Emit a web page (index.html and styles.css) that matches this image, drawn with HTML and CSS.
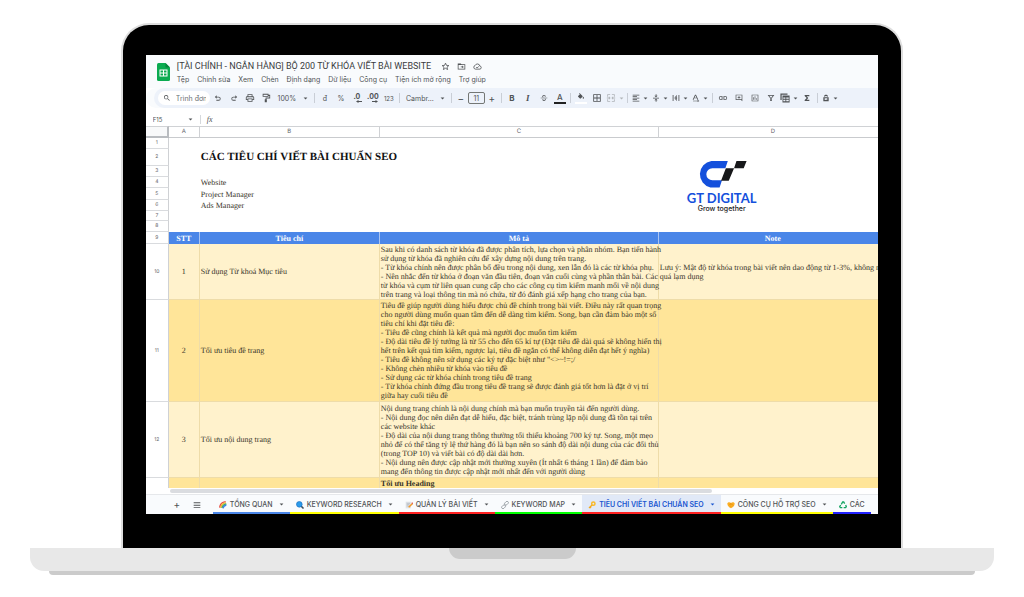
FILE: index.html
```html
<!DOCTYPE html>
<html lang="vi">
<head>
<meta charset="utf-8">
<meta name="viewport" content="width=device-width, initial-scale=1">
<title>BỘ 200 TỪ KHÓA VIẾT BÀI WEBSITE</title>
<link rel="stylesheet" href="styles.css">
</head>
<body>
<svg class="defs" aria-hidden="true">
  <symbol id="caret" viewBox="0 0 24 24"><path d="M3 7h18l-9 10z"/></symbol>
  <symbol id="search" viewBox="0 0 24 24"><path d="M15.500 14h-.8l-.3-.3A6.500 6.500 0 1 0 13.700 14.400l.3.300v.8l5 5 1.500-1.500zm-6 0a4.500 4.500 0 1 1 0-9 4.500 4.500 0 0 1 0 9z"/></symbol>
  <symbol id="undo" viewBox="0 0 24 24"><path d="M8 4v4h6a5.500 5.500 0 0 1 0 12H7v-2.500h7a3 3 0 0 0 0-7H8v4L2.500 9z"/></symbol>
  <symbol id="redo" viewBox="0 0 24 24"><path d="M16 4v4h-6a5.500 5.500 0 0 0 0 12h7v-2.500h-7a3 3 0 0 1 0-7h6v4L21.500 9z"/></symbol>
  <symbol id="print" viewBox="0 0 24 24"><path d="M19 8h-1V3H6v5H5a3 3 0 0 0-3 3v6h4v4h12v-4h4v-6a3 3 0 0 0-3-3zM8 5h8v3H8zm8 14H8v-4h8zm4-4h-2v-2H6v2H4v-4c0-.6.400-1 1-1h14c.6 0 1 .400 1 1z"/></symbol>
  <symbol id="paint" viewBox="0 0 24 24"><path d="M18 4V2H4v7h14V7h2v4h-9v4H9v7h5v-7h-1v-2h9V4zM6 4h10v3H6z"/></symbol>
  <symbol id="strike" viewBox="0 0 24 24"><path d="M2 11h20v2H2zM17 8h-2.500c0-2-1-2.500-2.500-2.500S9.300 6.300 9.300 8c0 .8.500 1.500 1.200 2H7.300C5.700 6 8 3 12 3s5 2.500 5 5zM7 16h2.500c0 1.500 1.200 2.500 2.700 2.500 2.300 0 3.300-2 2.100-4h2.700c1 3.500-1 6.500-5 6.500-3 0-5-2-5-5z"/></symbol>
  <symbol id="fill" viewBox="0 0 24 24"><path d="M16.600 8.900 7.600 0 6.200 1.400l2.400 2.400-5.200 5.100c-.5.600-.5 1.600 0 2.200l5.500 5.500c.6.500 1.600.5 2.200 0l5.500-5.500c.5-.6.500-1.600 0-2.200zM19 11.500s-2 2.200-2 3.500a2 2 0 0 0 4 0c0-1.300-2-3.500-2-3.500z"/></symbol>
  <symbol id="borders" viewBox="0 0 24 24"><path d="M3 3v18h18V3zm8 16H5v-6h6zm0-8H5V5h6zm8 8h-6v-6h6zm0-8h-6V5h6z"/></symbol>
  <symbol id="merge" viewBox="0 0 24 24"><path d="M3 3h7v2H5v4H3zm11 0h7v6h-2V5h-5zM3 15h2v4h5v2H3zm16 0h2v6h-7v-2h5zM2 11h5V8l4 4-4 4v-3H2zm20 0h-5V8l-4 4 4 4v-3h5z"/></symbol>
  <symbol id="align" viewBox="0 0 24 24"><path d="M2 2h20v2.500H2zm0 4.500h13v2.500H2zM2 11h20v2.500H2zm0 4.500h13V18H2zM2 20h20v2.500H2z"/></symbol>
  <symbol id="valign" viewBox="0 0 24 24"><path d="M3 11h18v2.500H3zM11 1h2.500v4H17l-5 5-5-5h4zm0 22h2.500v-4H17l-5-5-5 5h4z"/></symbol>
  <symbol id="wrap" viewBox="0 0 24 24"><path d="M2 3h2.500v18H2zm17.500 0H22v18h-2.500zM6 11h5L9 8.500 11 7l5 5-5 5-2-1.500 2-2.500H6zM12 4h2v16h-2z"/></symbol>
  <symbol id="rotate" viewBox="0 0 24 24"><path d="M2 17 9 2h3l7 15h-3l-1.500-4h-8L5 17zm5.500-6h6l-3-6.500zM3 20h14v-2.500l5 3.500-5 3v-2H3z"/></symbol>
  <symbol id="link" viewBox="0 0 24 24"><path d="M3.900 12A3.100 3.100 0 0 1 7 8.900h4V7H7a5 5 0 0 0 0 10h4v-1.900H7A3.100 3.100 0 0 1 3.900 12zM8 13h8v-2H8zm9-6h-4v1.900h4a3.100 3.100 0 0 1 0 6.200h-4V17h4a5 5 0 0 0 0-10z"/></symbol>
  <symbol id="comment" viewBox="0 0 24 24"><path d="M22 22V2H2v16h16zM4 4h16v12H4zm7 2h2v3h3v2h-3v3h-2v-3H8V9h3z"/></symbol>
  <symbol id="chart" viewBox="0 0 24 24"><path d="M2 2v20h20V2zm2 2h16v16H4zm3 6h2v7H7zm4-3h2v10h-2zm4 6h2v4h-2z"/></symbol>
  <symbol id="filter" viewBox="0 0 24 24"><path d="M2 3h20l-7.500 9.500V21h-5v-8.500zm4.500 2.200 5 6.300v7h1v-7l5-6.300z"/></symbol>
  <symbol id="views" viewBox="0 0 24 24"><path d="M1 1h17v3H4v13H1zm5 5h17v17H6zm2 5v3h5v-3zm7 0v3h6v-3zm-7 5v4h5v-4zm7 0v4h6v-4z"/></symbol>
  <symbol id="sigma" viewBox="0 0 24 24"><path d="M5 3h14v4H11l5 5-5 5h8v4H5v-3l6-6-6-6z"/></symbol>
  <symbol id="ext" viewBox="0 0 24 24"><path d="M6 7c1-6 11-6 12 0l-2 1c-1-3-7-3-8 0zM4 10h16v12H4z"/><path fill="#edf2fa" d="M8 13h8v2h-5v1h5v2H8z"/></symbol>
</svg>

<main class="laptop">
  <div class="lid">
    <div class="screen">
      <header class="top">
        <svg class="app-icon" viewBox="0 0 26 36" aria-hidden="true"><path fill="#0bab51" d="M3 0h14l9 9v24a3 3 0 0 1-3 3H3a3 3 0 0 1-3-3V3a3 3 0 0 1 3-3z"/><path fill="#06843d" d="M17 0l9 9h-9z"/><path fill="#fff" d="M5 13h16v14H5zm2 2v4h5v-4zm7 0v4h5v-4zm-7 6v4h5v-4zm7 0v4h5v-4z"/></svg>
        <div class="top-text">
          <div class="title-row">
            <h1 class="doc-title">[TÀI CHÍNH - NGÂN HÀNG] BỘ 200 TỪ KHÓA VIẾT BÀI WEBSITE</h1>
            <button class="mini" aria-label="Gắn dấu sao"><svg viewBox="0 0 24 24"><path fill="none" stroke="currentColor" stroke-width="2.200" d="m12 3 2.600 6 6.400.500-5 4.300 1.600 6.400L12 16.700l-5.600 3.500L8 13.800 3 9.500 9.400 9z"/></svg></button>
            <button class="mini" aria-label="Di chuyển"><svg viewBox="0 0 24 24"><path d="M2 4h8l2 2h10v14H2zm2 4v10h16V8zm6 4h4V9.500l4 3.500-4 3.500V14h-4z"/></svg></button>
            <button class="mini" aria-label="Đã lưu"><svg viewBox="0 0 24 24"><path fill="none" stroke="currentColor" stroke-width="2.200" d="M6.500 19a5 5 0 0 1-.7-9.800 6.500 6.500 0 0 1 12.400 1.500A4.200 4.200 0 0 1 18.500 19zM8.500 13.500l2.500 2.500 4.500-4.500"/></svg></button>
          </div>
          <nav class="menu">
            <button>Tệp</button><button>Chỉnh sửa</button><button>Xem</button><button>Chèn</button><button>Định dạng</button><button>Dữ liệu</button><button>Công cụ</button><button>Tiện ích mở rộng</button><button>Trợ giúp</button>
          </nav>
        </div>
      </header>

      <div class="toolbar">
        <label class="find"><svg class="ic"><use href="#search"/></svg><input type="text" aria-label="Trình đơn" placeholder="Trình đơn"></label>
        <button class="tool" aria-label="Hoàn tác"><svg class="ic"><use href="#undo"/></svg></button>
        <button class="tool" aria-label="Làm lại"><svg class="ic"><use href="#redo"/></svg></button>
        <button class="tool" aria-label="In"><svg class="ic big"><use href="#print"/></svg></button>
        <button class="tool" aria-label="Sao chép định dạng"><svg class="ic big"><use href="#paint"/></svg></button>
        <button class="tool zoom">100%<svg class="car"><use href="#caret"/></svg></button>
        <span class="sep"></span>
        <button class="tool">đ</button>
        <button class="tool">%</button>
        <button class="tool dec" aria-label="Giảm số thập phân">.0<svg class="arrow" viewBox="0 0 12 6"><path d="M12 2H5V0L0 3l5 3V4h7z"/></svg></button>
        <button class="tool dec" aria-label="Tăng số thập phân">.00<svg class="arrow" viewBox="0 0 12 6"><path d="M0 2h7V0l5 3-5 3V4H0z"/></svg></button>
        <button class="tool small">123</button>
        <span class="sep"></span>
        <button class="tool font">Cambr...<svg class="car"><use href="#caret"/></svg></button>
        <span class="sep"></span>
        <button class="tool step" aria-label="Giảm cỡ chữ">−</button>
        <input class="size" type="text" value="11" aria-label="Cỡ chữ">
        <button class="tool step" aria-label="Tăng cỡ chữ">+</button>
        <span class="sep"></span>
        <button class="tool bold">B</button>
        <button class="tool italic">I</button>
        <button class="tool" aria-label="Gạch ngang"><svg class="ic"><use href="#strike"/></svg></button>
        <button class="tool"><span class="ink">A</span></button>
        <span class="sep"></span>
        <button class="tool" aria-label="Màu nền"><span class="ink bucket"><svg class="ic"><use href="#fill"/></svg></span></button>
        <button class="tool" aria-label="Đường viền"><svg class="ic big"><use href="#borders"/></svg></button>
        <button class="tool wide off" aria-label="Hợp nhất ô"><svg class="ic big"><use href="#merge"/></svg><svg class="car"><use href="#caret"/></svg></button>
        <span class="sep"></span>
        <button class="tool wide" aria-label="Căn ngang"><svg class="ic"><use href="#align"/></svg><svg class="car"><use href="#caret"/></svg></button>
        <button class="tool wide" aria-label="Căn dọc"><svg class="ic"><use href="#valign"/></svg><svg class="car"><use href="#caret"/></svg></button>
        <button class="tool wide" aria-label="Xuống dòng"><svg class="ic"><use href="#wrap"/></svg><svg class="car"><use href="#caret"/></svg></button>
        <button class="tool wide" aria-label="Xoay chữ"><svg class="ic"><use href="#rotate"/></svg><svg class="car"><use href="#caret"/></svg></button>
        <span class="sep"></span>
        <button class="tool" aria-label="Chèn liên kết"><svg class="ic big"><use href="#link"/></svg></button>
        <button class="tool" aria-label="Nhận xét"><svg class="ic"><use href="#comment"/></svg></button>
        <button class="tool" aria-label="Biểu đồ"><svg class="ic"><use href="#chart"/></svg></button>
        <button class="tool" aria-label="Bộ lọc"><svg class="ic"><use href="#filter"/></svg></button>
        <button class="tool wide" aria-label="Chế độ lọc"><svg class="ic big"><use href="#views"/></svg><svg class="car"><use href="#caret"/></svg></button>
        <button class="tool" aria-label="Hàm"><svg class="ic"><use href="#sigma"/></svg></button>
        <span class="sep"></span>
        <button class="tool wide" aria-label="Tiện ích"><svg class="ic"><use href="#ext"/></svg><svg class="car"><use href="#caret"/></svg></button>
      </div>

      <div class="formula">
        <input class="cell-name" type="text" value="F15" aria-label="Ô">
        <svg class="car"><use href="#caret"/></svg>
        <span class="fx">fx</span>
      </div>

      <div class="sheet">
        <table class="grid">
          <colgroup><col class="c-num"><col class="c-a"><col class="c-b"><col class="c-c"><col class="c-d"></colgroup>
          <thead><tr class="letters"><th class="corner"></th><th>A</th><th>B</th><th>C</th><th>D</th></tr></thead>
          <tbody>
            <tr class="r-s"><th>1</th><td></td><td></td><td></td><td></td></tr>
            <tr class="r-title"><th>2</th><td></td><td colspan="2" class="heading">CÁC TIÊU CHÍ VIẾT BÀI CHUẨN SEO</td><td></td></tr>
            <tr class="r-s"><th>3</th><td></td><td></td><td></td><td></td></tr>
            <tr class="r-s"><th>4</th><td></td><td>Website</td><td></td><td></td></tr>
            <tr class="r-m"><th>5</th><td></td><td>Project Manager</td><td></td><td></td></tr>
            <tr class="r-s"><th>6</th><td></td><td>Ads Manager</td><td></td><td></td></tr>
            <tr class="r-xs"><th>7</th><td></td><td></td><td></td><td></td></tr>
            <tr class="r-s"><th>8</th><td></td><td></td><td></td><td></td></tr>
            <tr class="r-m blue"><th>9</th><td>STT</td><td>Tiêu chí</td><td>Mô tả</td><td>Note</td></tr>
            <tr class="r-10 light"><th>10</th><td class="mid">1</td><td>Sử dụng Từ khoá Mục tiêu</td><td>Sau khi có danh sách từ khóa đã được phân tích, lựa chọn và phân nhóm. Bạn tiến hành<br>sử dụng từ khóa đã nghiên cứu để xây dựng nội dung trên trang.<br>- Từ khóa chính nên được phân bổ đều trong nội dung, xen lẫn đó là các từ khóa phụ.<br>- Nên nhắc đến từ khóa ở đoạn văn đầu tiên, đoạn văn cuối cùng và phần thân bài. Các<br>từ khóa và cụm từ liên quan cung cấp cho các công cụ tìm kiếm manh mối về nội dung<br>trên trang và loại thông tin mà nó chứa, từ đó đánh giá xếp hạng cho trang của bạn.</td><td>Lưu ý: Mật độ từ khóa trong bài viết nên dao động từ 1-3%, không nên<br>quá lạm dụng</td></tr>
            <tr class="r-11 deep"><th>11</th><td class="mid">2</td><td>Tối ưu tiêu đề trang</td><td>Tiêu đề giúp người dùng hiểu được chủ đề chính trong bài viết. Điều này rất quan trọng<br>cho người dùng muốn quan tâm đến dễ dàng tìm kiếm. Song, bạn cần đảm bảo một số<br>tiêu chí khi đặt tiêu đề:<br>- Tiêu đề cũng chính là kết quả mà người đọc muốn tìm kiếm<br>- Độ dài tiêu đề lý tưởng là từ 55 cho đến 65 kí tự (Đặt tiêu đề dài quá sẽ không hiển thị<br>hết trên kết quả tìm kiếm, ngược lại, tiêu đề ngắn có thể không diễn đạt hết ý nghĩa)<br>- Tiêu đề không nên sử dụng các ký tự đặc biệt như "&lt;&gt;~!=;/<br>- Không chèn nhiều từ khóa vào tiêu đề<br>- Sử dụng các từ khóa chính trong tiêu đề trang<br>- Từ khóa chính đứng đầu trong tiêu đề trang sẽ được đánh giá tốt hơn là đặt ở vị trí<br>giữa hay cuối tiêu đề</td><td></td></tr>
            <tr class="r-12 light"><th>12</th><td class="mid">3</td><td>Tối ưu nội dung trang</td><td>Nội dung trang chính là nội dung chính mà bạn muốn truyền tải đến người dùng.<br>- Nội dung đọc nên diễn đạt dễ hiểu, đặc biệt, tránh trùng lặp nội dung đã tồn tại trên<br>các website khác<br>- Độ dài của nội dung trang thông thường tối thiểu khoảng 700 ký tự. Song, một mẹo<br>nhỏ để có thể tăng tỷ lệ thứ hàng đó là bạn nên so sánh độ dài nội dung của các đối thủ<br>(trong TOP 10) và viết bài có độ dài dài hơn.<br>- Nội dung nên được cập nhật mới thường xuyên (Ít nhất 6 tháng 1 lần) để đảm bảo<br>mang đến thông tin được cập nhật mới nhất đến với người dùng</td><td></td></tr>
            <tr class="r-xs deep last"><th></th><td></td><td></td><td class="strong">Tối ưu Heading</td><td></td></tr>
          </tbody>
        </table>
        <div class="logo">
          <svg class="logo-mark" viewBox="0 0 50 28" aria-hidden="true"><path fill="#1450dc" d="M31 0H14a14 14 0 0 0-1 27.500h9.500L25 20H15a6 6 0 0 1 0-12.500h13.500z"/><path fill="#17181a" d="M29 7.500h8.500L32 20.500h-8zM40 0h10.500l-3 7.500h-10z"/></svg>
          <span class="logo-name">GT DIGITAL</span>
          <span class="logo-tag">Grow together</span>
        </div>
      </div>
      <div class="scroll"><div class="thumb"></div></div>

      <footer class="tabs">
        <button class="tab-act plus" aria-label="Thêm trang tính">+</button>
        <button class="tab-act" aria-label="Tất cả trang tính"><svg class="ic" viewBox="0 0 24 24"><path d="M2 3h20v2H2zm0 5h20v2H2zm0 5h20v2H2zm0 5h20v2H2z"/></svg></button>
        <button class="tab t-blue"><svg class="emo line" viewBox="0 0 24 24" stroke-width="4"><path stroke="#e8453c" d="M2 20C3 9 10 3 20 2"/><path stroke="#f8b62b" d="M5.500 21C6 12 12 6 21 5.500"/><path stroke="#44b35a" d="M9 21c1-6 5-11 13-12"/><path stroke="#3f83e6" d="M12 22c1-5 4-9 10-10"/></svg>TỔNG QUAN<svg class="car"><use href="#caret"/></svg></button>
        <button class="tab t-yellow"><svg class="emo" viewBox="0 0 24 24"><path stroke="#3b4d5c" stroke-width="5" stroke-linecap="round" d="m15 15 6 6"/><circle cx="10" cy="10" r="8.500" fill="#2b9bea" stroke="#1b6fc2" stroke-width="2"/></svg>KEYWORD RESEARCH<svg class="car"><use href="#caret"/></svg></button>
        <button class="tab t-red"><svg class="emo" viewBox="0 0 24 24"><path fill="#dfe3e8" d="M2 2h16v20H2z"/><path stroke="#9aa3ad" stroke-width="1.500" d="M5 7h10M5 11h8M5 15h6"/><path stroke="#f39a27" stroke-width="4.500" d="M22 8 11 19"/><path fill="#d8453b" d="m19 6 3-2 2 3-2 3z"/></svg>QUẢN LÝ BÀI VIẾT<svg class="car"><use href="#caret"/></svg></button>
        <button class="tab t-green"><svg class="emo line" viewBox="0 0 24 24" stroke="#90989e" stroke-width="2.500"><rect x="10" y="3" width="13" height="8" rx="4" transform="rotate(-45 16 7)"/><rect x="1" y="13" width="13" height="8" rx="4" transform="rotate(-45 8 17)"/></svg>KEYWORD MAP<svg class="car"><use href="#caret"/></svg></button>
        <button class="tab t-red active"><svg class="emo" viewBox="0 0 24 24"><path stroke="#f3a81d" stroke-width="4" fill="none" d="M13 11 3 21M6 18l3 3"/><circle cx="16" cy="8" r="5" fill="none" stroke="#f9b928" stroke-width="4.500"/></svg>TIÊU CHÍ VIẾT BÀI CHUẨN SEO<svg class="car"><use href="#caret"/></svg></button>
        <button class="tab t-yellow"><svg class="emo" viewBox="0 0 24 24"><path fill="#fbae23" d="M1 8c0-5 8-6 11-2 3-4 11-3 11 2 0 6-6 11-11 14C7 19 1 14 1 8z"/><path stroke="#d98510" stroke-width="1.500" fill="none" d="m12 6-4 5 3 1 3-3 5 5M9 19l3-3"/></svg>CÔNG CỤ HỖ TRỢ SEO<svg class="car"><use href="#caret"/></svg></button>
        <button class="tab t-navy"><svg class="emo line" viewBox="0 0 24 24" stroke="#16a562" stroke-width="4"><path d="m7 10 4-7h3l3 5M20 12l2 5-2 3h-6M10 20H4l-2-3 3-5"/></svg>CÁC</button>
      </footer>
    </div>
  </div>
  <div class="base"><div class="notch"></div></div>
  <div class="foot"></div>
</main>
</body>
</html>
```
FILE: styles.css
```css
* { box-sizing: border-box; }
body {
  margin: 0;
  background: #fff;
  color: #505356;
  font: 7px/9px Inter, "Noto Sans", sans-serif;
}
button, input {
  margin: 0;
  padding: 0;
  border: 0;
  background: none;
  color: inherit;
  font: inherit;
}
svg { fill: currentColor; }
.defs { position: absolute; width: 0; height: 0; }

/* Laptop */
.laptop { display: flex; flex-direction: column; align-items: center; padding-top: 23px; }
.lid {
  width: 76.4%;
  padding: 30px 23px 34px;
  background: #000;
  border: 2px solid #dedede;
  border-bottom: 0;
  border-radius: 28px 28px 0 0;
}
.screen { overflow: hidden; background: #fff; }
.base {
  display: flex;
  justify-content: center;
  width: 94.2%;
  height: 23px;
  background: #e8e8e8;
  border-radius: 0 0 14px 14px;
}
.notch { width: 127px; height: 11px; background: #cbcbcb; border-radius: 0 0 12px 12px; }
.foot { width: 90.4%; height: 4px; background: #cbcbcb; border-radius: 0 0 4px 4px; }

/* Title and menus */
.top { display: flex; gap: 7px; height: 33px; padding: 5px 0 0 11px; background: #f9fbfd; }
.app-icon { width: 13px; height: 18px; margin-top: 3px; }
.title-row { display: flex; align-items: center; gap: 7px; height: 13px; }
.doc-title { margin: 0 3px 0 0; font: 400 9px/13px Roboto, sans-serif; color: #3a3c3e; white-space: nowrap; }
.mini { width: 9px; height: 9px; }
.mini svg { display: block; width: 9px; height: 9px; }
.menu { display: flex; gap: 8px; height: 12px; align-items: center; white-space: nowrap; }

/* Toolbar */
.toolbar {
  display: flex;
  align-items: center;
  height: 20px;
  margin-left: 8px;
  background: #edf2fa;
  border-radius: 10px 0 0 10px;
  box-shadow: -8px 0 0 #f9fbfd;
}
.toolbar > * { flex: none; }
.find {
  display: flex;
  align-items: center;
  gap: 5px;
  width: 52px;
  height: 14px;
  margin: 0 0 0 4px;
  padding-left: 5px;
  background: #fff;
  border-radius: 7px;
}
.find input { width: 30px; overflow: hidden; }
.find input::placeholder { color: #6b6f73; opacity: 1; }
.ic { flex: none; display: block; width: 8px; height: 8px; }
.big { width: 10px; height: 10px; }
.car { flex: none; display: block; width: 5px; height: 5px; }
.tool { display: flex; align-items: center; justify-content: center; width: 16px; height: 16px; }
.zoom { width: 38px; gap: 7px; }
.font { width: 47px; gap: 6px; }
.small { font-size: 6px; }
.dec { flex-direction: column; font-weight: 700; line-height: 7px; }
.arrow { width: 6px; height: 3px; margin-left: 5px; }
.step { width: 14px; font-size: 10px; }
.size { width: 17px; height: 12px; border: 1px solid #747775; border-radius: 2px; text-align: center; }
.wide { width: 20px; gap: 3px; }
.off { color: #b0b4b8; }
.bold { font-weight: 700; font-size: 8px; }
.italic { font: italic 700 9px "Liberation Serif", serif; }
.ink { width: 12px; height: 11px; border-bottom: 2px solid #222; font-weight: 500; font-size: 8px; line-height: 9px; }
.bucket { display: flex; justify-content: center; border-color: #fff; }
.sep { width: 5px; height: 10px; background: linear-gradient(#c9ced6, #c9ced6) center / 1px 100% no-repeat; }

/* Formula bar */
.formula { display: flex; align-items: center; height: 18px; padding: 4px 0 0 7px; }
.cell-name { width: 35px; font-size: 6px; }
.fx { margin-left: 7px; padding-left: 6px; border-left: 1px solid #d5d8dc; font: italic 8px/9px "Liberation Serif", serif; }

/* Grid */
.sheet { position: relative; overflow: hidden; }
.grid {
  width: 742px;
  table-layout: fixed;
  border-collapse: separate;
  border-spacing: 0;
  color: #3a352a;
  font: 8px/9px "Liberation Serif", serif;
  text-rendering: geometricPrecision;
}
.c-num { width: 23px; }
.c-a { width: 31px; }
.c-b { width: 180px; }
.c-c { width: 279px; }
.grid td { padding: 0 1px; white-space: nowrap; vertical-align: middle; }
.grid th {
  padding: 0;
  border-right: 1px solid #cfd1d4;
  border-bottom: 1px solid #d9dbde;
  color: #5f6368;
  font: 5px/6px Inter, sans-serif;
}
.letters { height: 12px; }
.letters th { border-top: 1px solid #d0d2d5; border-bottom: 1px solid #c9cbce; font-size: 6px; }
.grid .corner { border-right: 2px solid #b9bcc0; border-bottom: 2px solid #b9bcc0; background: #f8f9fa; }
.r-xs { height: 10px; }
.r-s { height: 11px; }
.r-m { height: 12px; }
.r-title { height: 17px; }
.r-10 { height: 56px; }
.r-11 { height: 102px; }
.r-12 { height: 76px; }
.grid .heading { color: #111; font-size: 11px; font-weight: 700; line-height: 15px; }
.blue td { border-right: 1px solid #a9c4f2; background: #4a86e8; color: #fff; font-weight: 700; text-align: center; }
.light td { background: #fff2cc; }
.deep td { background: #ffe599; }
.light td, .deep td { border-right: 1px solid #eedca9; border-bottom: 1px solid #eedca9; }
.last td, .last th { border-bottom: 0; }
.grid .mid { text-align: center; }
.grid .strong { font-weight: 700; }

/* Picture floating over the cells */
.logo { position: absolute; top: 35px; left: 541px; display: flex; flex-direction: column; align-items: center; white-space: nowrap; }
.logo-mark { width: 50px; height: 27px; }
.logo-name { margin-top: 3px; color: #1450dc; font: 700 13px/14px Lato, sans-serif; }
.logo-tag { color: #222; font: 500 7px/8px Inter, sans-serif; }

.scroll { height: 6px; padding: 1px 0 1px 24px; }
.thumb { width: 76.6%; height: 4px; background: #dadce0; border-radius: 2px; }

/* Sheet tabs */
.tabs { display: flex; height: 20px; padding-left: 21px; background: #f9fbfd; border-top: 1px solid #e6e8eb; white-space: nowrap; }
.tab-act { display: flex; align-items: center; justify-content: center; width: 20px; }
.plus { font-size: 10px; }
.tab {
  flex: none;
  display: flex;
  align-items: center;
  gap: 3px;
  padding: 2px 6px 0;
  border-bottom: 2px solid;
  font-weight: 500;
}
.tab .car { margin-left: 3px; }
.tab-act + .t-blue { margin-left: 6px; }
.emo { width: 8px; height: 8px; }
.line { fill: none; }
.t-blue { border-color: #4a86e8; }
.t-yellow { border-color: #ff0; }
.t-red { border-color: #f22; }
.t-green { border-color: #0f0; }
.t-navy { border-color: #22f; }
.active { background: #e1e9f7; color: #1a56d0; font-weight: 600; }
```
